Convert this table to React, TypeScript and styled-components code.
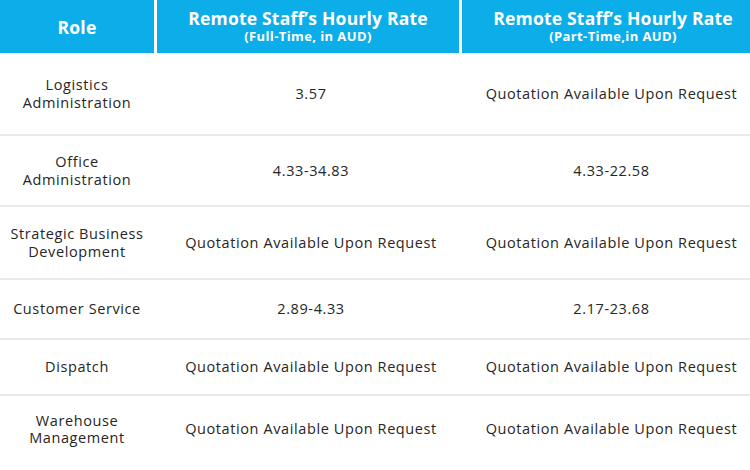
import React from "react";
import styled, { createGlobalStyle } from "styled-components";

const Global = createGlobalStyle`
  html, body { margin: 0; padding: 0; background: #ffffff; }
  body { width: 750px; height: 470px; overflow: hidden; font-family: "Open Sans", "Noto Sans", sans-serif; }
`;

const Table = styled.div`
  width: 750px;
  display: flex;
  flex-direction: column;
`;

const HeaderRow = styled.div`
  display: grid;
  grid-template-columns: 154px 302px 1fr;
  column-gap: 3px;
  height: 53px;
`;

const HeadCell = styled.div<{ $shift?: number }>`
  background: #0caeea;
  color: #ffffff;
  display: flex;
  flex-direction: column;
  align-items: center;
  justify-content: center;
  gap: 2px;
  font-weight: 700;
  padding-left: ${(p) => p.$shift ?? 0}px;
`;

const HeadTitle = styled.div`
  font-size: 17.5px;
  line-height: 18px;
  letter-spacing: 0.2px;
`;

const HeadSub = styled.div`
  font-size: 13px;
  line-height: 15px;
  letter-spacing: 0.4px;
`;

const Row = styled.div<{ $h: number; $last?: boolean }>`
  display: grid;
  grid-template-columns: 154px 305px 1fr;
  height: ${(p) => p.$h}px;
  border-bottom: ${(p) => (p.$last ? "none" : "2px solid #e9e9e9")};
  box-sizing: border-box;
`;

const Cell = styled.div<{ $pad?: number }>`
  display: flex;
  align-items: center;
  justify-content: center;
  text-align: center;
  color: #262626;
  font-size: 14.5px;
  line-height: 17.5px;
  letter-spacing: 0.6px;
  padding-left: ${(p) => p.$pad ?? 0}px;
  white-space: pre-line;
`;

const Q = "Quotation Available Upon Request";

const rows: { role: string; full: string; part: string; h: number }[] = [
  { role: "Logistics\nAdministration", full: "3.57", part: Q, h: 83 },
  { role: "Office\nAdministration", full: "4.33-34.83", part: "4.33-22.58", h: 71 },
  { role: "Strategic Business\nDevelopment", full: Q, part: Q, h: 73 },
  { role: "Customer Service", full: "2.89-4.33", part: "2.17-23.68", h: 60 },
  { role: "Dispatch", full: Q, part: Q, h: 56 },
  { role: "Warehouse\nManagement", full: Q, part: Q, h: 66 },
];

export default function App() {
  return (
    <>
      <Global />
      <Table>
        <HeaderRow>
          <HeadCell>
            <HeadTitle>Role</HeadTitle>
          </HeadCell>
          <HeadCell>
            <HeadTitle>Remote Staff’s Hourly Rate</HeadTitle>
            <HeadSub>(Full-Time, in AUD)</HeadSub>
          </HeadCell>
          <HeadCell $shift={14}>
            <HeadTitle>Remote Staff’s Hourly Rate</HeadTitle>
            <HeadSub>(Part-Time,in AUD)</HeadSub>
          </HeadCell>
        </HeaderRow>
        {rows.map((r, i) => (
          <Row key={i} $h={r.h} $last={i === rows.length - 1}>
            <Cell>{r.role}</Cell>
            <Cell $pad={9}>{r.full}</Cell>
            <Cell $pad={14}>{r.part}</Cell>
          </Row>
        ))}
      </Table>
    </>
  );
}
